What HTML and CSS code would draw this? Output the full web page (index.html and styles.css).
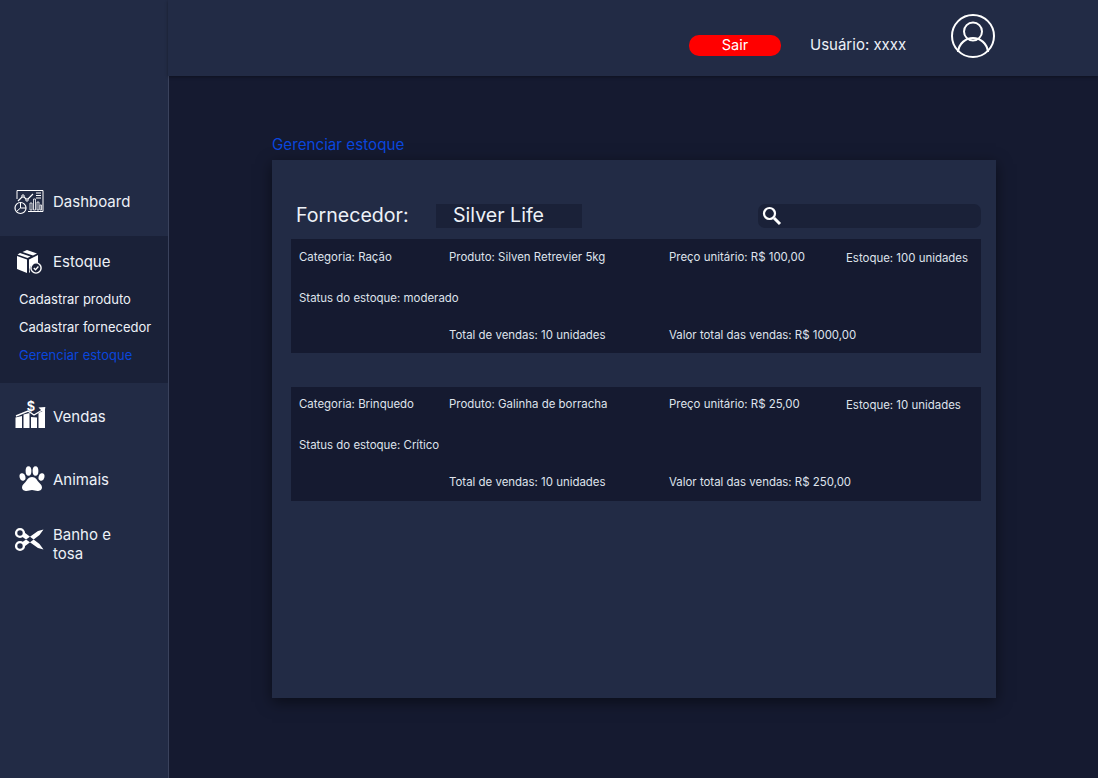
FILE: index.html
```html
<!DOCTYPE html>
<html lang="en">
<head>
    <meta charset="UTF-8">
    <meta name="viewport" content="width=device-width, initial-scale=1.0">
    <title>Gerenciar estoque</title>
    <link rel="stylesheet" href="styles.css">
</head>
<body>
    <aside class="sidebar">
        <a class="nav-item nav-dashboard">
            <svg class="nav-icon" viewBox="0 0 30 26" fill="none" stroke="#fff" stroke-width="1">
                <path d="M3 10V1.500h26v21H14"/>
                <path d="M4 12l5-5 4 4 6-6" stroke-width="1.200"/>
                <path d="M22 4h5M22 6.500h5M22 9h5"/>
                <circle cx="9" cy="7" r="1.200" fill="#222b45"/>
                <circle cx="13" cy="11" r="1.200" fill="#222b45"/>
                <circle cx="6.500" cy="19" r="5.500" fill="#222b45" stroke-width="1.200"/>
                <path d="M6.500 13.500V19H12M6.500 19l-4 3.500"/>
                <path d="M16 21v-7h2v7zM19.500 21V10h2v11zM23 21v-8h2v8zM26 21v-5h1.500v5z" stroke-width="0.800"/>
            </svg>
            <span>Dashboard</span>
        </a>
        <section class="nav-group">
            <a class="nav-item nav-estoque">
                <svg class="nav-icon" viewBox="0 0 30 26">
                    <path fill="#fff" d="M13 1l10 3.500-4 2-10.500-3.500zM6 4l10.500 3.500-3 1.500L3.500 5.500zM3 7l10 3.500V24L3 20zM15 10.500l9-4.500v8a7 7 0 0 0-8 9l-1 1z"/>
                    <circle cx="22" cy="19" r="5.800" fill="#fff"/>
                    <circle cx="22" cy="19" r="4.400" fill="#1a2138"/>
                    <path d="M19.800 19l1.700 1.800 2.900-3.300" fill="none" stroke="#fff" stroke-width="1.300"/>
                </svg>
                <span>Estoque</span>
            </a>
            <ul class="subnav">
                <li>Cadastrar produto</li>
                <li>Cadastrar fornecedor</li>
                <li class="active">Gerenciar estoque</li>
            </ul>
        </section>
        <a class="nav-item nav-vendas">
            <svg class="nav-icon" viewBox="0 0 32 32">
                <path fill="#fff" d="M1.500 31V20.500L8 19v12zM9.500 31V17.500L15.500 16v15zM17 31V20l6 .5V31zM24.500 31V16l6.500-3v18z"/>
                <path d="M2 19l12-5 6 4 10-6" fill="none" stroke="#fff" stroke-width="1.400"/>
                <path d="M24.500 10.500l6.800-.5-.8 6.500z" fill="#fff"/>
                <text x="17" y="13.500" class="dollar">$</text>
            </svg>
            <span>Vendas</span>
        </a>
        <a class="nav-item nav-animais">
            <svg class="nav-icon" viewBox="-3 1 30 26">
                <ellipse cx="5.500" cy="11" rx="2.900" ry="3.800" fill="#fff" transform="rotate(-15 5.500 11)"/>
                <ellipse cx="11.500" cy="5" rx="2.900" ry="4.700" fill="#fff"/>
                <ellipse cx="18.500" cy="5" rx="2.900" ry="4.700" fill="#fff"/>
                <ellipse cx="24.500" cy="11" rx="2.900" ry="3.800" fill="#fff" transform="rotate(15 24.500 11)"/>
                <path fill="#fff" d="M15 11c3.500 0 5 3 6.500 5s3.500 3 3.500 5.500-2.500 3.500-4.500 3.500-3.500-1-5.500-1-3.500 1-5.500 1-4.500-1-4.500-3.500S7 18 8.500 16 11.500 11 15 11z"/>
            </svg>
            <span>Animais</span>
        </a>
        <a class="nav-item nav-banho">
            <svg class="nav-icon" viewBox="0 0 30 28" fill="none" stroke="#fff">
                <circle cx="6" cy="7" r="3.900" stroke-width="2.400"/>
                <circle cx="6" cy="20" r="3.900" stroke-width="2.400"/>
                <path fill="#fff" stroke="none" d="M8.500 16L24 5 29.500 3.500 25.500 9 10.500 20.500zM8.500 11L24 22 29.500 23.500 25.500 18 10.500 6.500z"/>
            </svg>
            <span>Banho e<br>tosa</span>
        </a>
    </aside>

    <div class="page">
        <header class="topbar">
            <button class="btn-sair">Sair</button>
            <span class="usuario">Usuário: xxxx</span>
            <svg class="avatar" viewBox="0 0 44 44" fill="none" stroke="#fff" stroke-width="2">
                <circle cx="22" cy="22" r="21"/>
                <circle cx="22" cy="17.500" r="9"/>
                <path d="M7 38c1-9 8-14 15-14s14 5 15 14"/>
            </svg>
        </header>

        <main class="content">
            <h1 class="page-title">Gerenciar estoque</h1>
            <section class="card">
                <div class="card-top">
                    <label class="fornecedor-label">Fornecedor:</label>
                    <div class="fornecedor-value">Silver Life</div>
                    <div class="search">
                        <svg class="search-icon" viewBox="0 0 20 20" fill="none" stroke="#fff">
                            <circle cx="7.500" cy="7.500" r="5.500" stroke-width="2.200"/>
                            <path d="M12 12l6 6" stroke-width="3"/>
                        </svg>
                    </div>
                </div>

                <article class="produto">
                    <span>Categoria: Ração</span>
                    <span>Produto: Silven Retrevier 5kg</span>
                    <span>Preço unitário: R$ 100,00</span>
                    <span class="estoque">Estoque: 100 unidades</span>
                    <span class="status">Status do estoque: moderado</span>
                    <span class="col-2">Total de vendas: 10 unidades</span>
                    <span class="col-3">Valor total das vendas: R$ 1000,00</span>
                </article>

                <article class="produto">
                    <span>Categoria: Brinquedo</span>
                    <span>Produto: Galinha de borracha</span>
                    <span>Preço unitário: R$ 25,00</span>
                    <span class="estoque">Estoque: 10 unidades</span>
                    <span class="status">Status do estoque: Crítico</span>
                    <span class="col-2">Total de vendas: 10 unidades</span>
                    <span class="col-3">Valor total das vendas: R$ 250,00</span>
                </article>
            </section>
        </main>
    </div>
</body>
</html>
```

FILE: styles.css
```css
* {
    margin: 0;
    padding: 0;
    box-sizing: border-box;
}

html, body {
    height: 100%;
}

body {
    display: flex;
    overflow: hidden;
    font-family: Inter, "Noto Sans", sans-serif;
    background-color: #151a30;
    color: #fff;
}

/* Sidebar */
.sidebar {
    width: 169px;
    flex-shrink: 0;
    padding-top: 185px;
    background-color: #222b45;
    border-right: 1px solid #3a425c;
}

.nav-item {
    display: flex;
    align-items: center;
    gap: 9px;
    padding-left: 14px;
    font-size: 15px;
    line-height: 18px;
    color: #edf1f7;
}

.nav-icon {
    width: 30px;
    flex-shrink: 0;
}

.nav-dashboard {
    height: 34px;
    margin-bottom: 17px;
}

.nav-dashboard .nav-icon {
    height: 26px;
}

.nav-group {
    height: 147px;
    background-color: #1a2138;
}

.nav-estoque {
    height: 50px;
    padding-top: 2px;
}

.nav-estoque .nav-icon {
    height: 26px;
}

.subnav {
    list-style: none;
    margin-top: -1px;
    padding-left: 19px;
    font-size: 13px;
    line-height: 28px;
    color: #edf1f7;
}

.subnav .active {
    color: #0a46dc;
}

.nav-vendas {
    gap: 7px;
    height: 32px;
    margin-top: 18px;
}

.nav-vendas .nav-icon {
    width: 32px;
    height: 32px;
    margin-top: -8px;
}

.dollar {
    font-family: "Liberation Sans", sans-serif;
    font-size: 14px;
    font-weight: bold;
    text-anchor: middle;
    fill: #fff;
}

.nav-animais {
    height: 30px;
    margin-top: 32px;
}

.nav-animais .nav-icon {
    height: 26px;
    overflow: visible;
}

.nav-banho {
    align-items: flex-start;
    margin-top: 30px;
    line-height: 19px;
}

.nav-banho .nav-icon {
    height: 28px;
    margin-top: 1px;
}

/* Top bar */
.page {
    flex: 1;
    min-width: 0;
}

.topbar {
    display: flex;
    align-items: flex-start;
    height: 76px;
    margin-left: -1px;
    background-color: #222b45;
    box-shadow: 0 1px 3px rgba(0, 0, 0, 0.35);
}

.btn-sair {
    width: 92px;
    height: 21px;
    margin: 35px 29px 0 521px;
    padding-bottom: 2px;
    border: none;
    border-radius: 10px;
    background-color: #ff0000;
    color: #fff;
    font-family: inherit;
    font-size: 14.5px;
}

.usuario {
    width: 141px;
    margin-top: 36px;
    font-size: 15px;
    line-height: 17px;
    color: #edf1f7;
}

.avatar {
    width: 44px;
    height: 44px;
    margin-top: 14px;
}

/* Content */
.content {
    padding: 60px 102px 0 103px;
}

.page-title {
    height: 24px;
    font-size: 15.2px;
    font-weight: 400;
    line-height: 18px;
    color: #0a46dc;
}

.card {
    width: 724px;
    height: 538px;
    padding: 43px 15px 0 19px;
    background-color: #222b45;
    box-shadow: 0 4px 14px rgba(0, 0, 0, 0.5);
}

.card-top {
    display: flex;
    align-items: center;
    height: 25px;
    margin-bottom: 11px;
}

.fornecedor-label {
    width: 145px;
    padding-left: 5px;
    padding-bottom: 1px;
    font-size: 19.6px;
    color: #edf1f7;
}

.fornecedor-value {
    width: 146px;
    height: 24px;
    padding-left: 17px;
    font-size: 19.6px;
    line-height: 23px;
    background-color: #1a2138;
    color: #edf1f7;
}

.search {
    display: flex;
    align-items: center;
    width: 223px;
    height: 24px;
    margin-left: 176px;
    padding-left: 4px;
    border-radius: 7px;
    background-color: #1a2138;
}

.search-icon {
    width: 20px;
    height: 20px;
}

.produto {
    display: grid;
    grid-template-columns: 150px 220px 177px 1fr;
    grid-template-rows: 20px 62px 12px;
    align-items: center;
    width: 690px;
    height: 114px;
    margin-bottom: 34px;
    padding: 8px 0 0 8px;
    font-size: 11.45px;
    color: #dfe3ec;
    background-color: #151a30;
}

.produto + .produto {
    padding-top: 7px;
}

.estoque {
    padding-top: 1px;
}

.status {
    grid-column: 1 / -1;
}

.col-2 {
    grid-column: 2;
}

.col-3 {
    grid-column: 3 / -1;
}
```
